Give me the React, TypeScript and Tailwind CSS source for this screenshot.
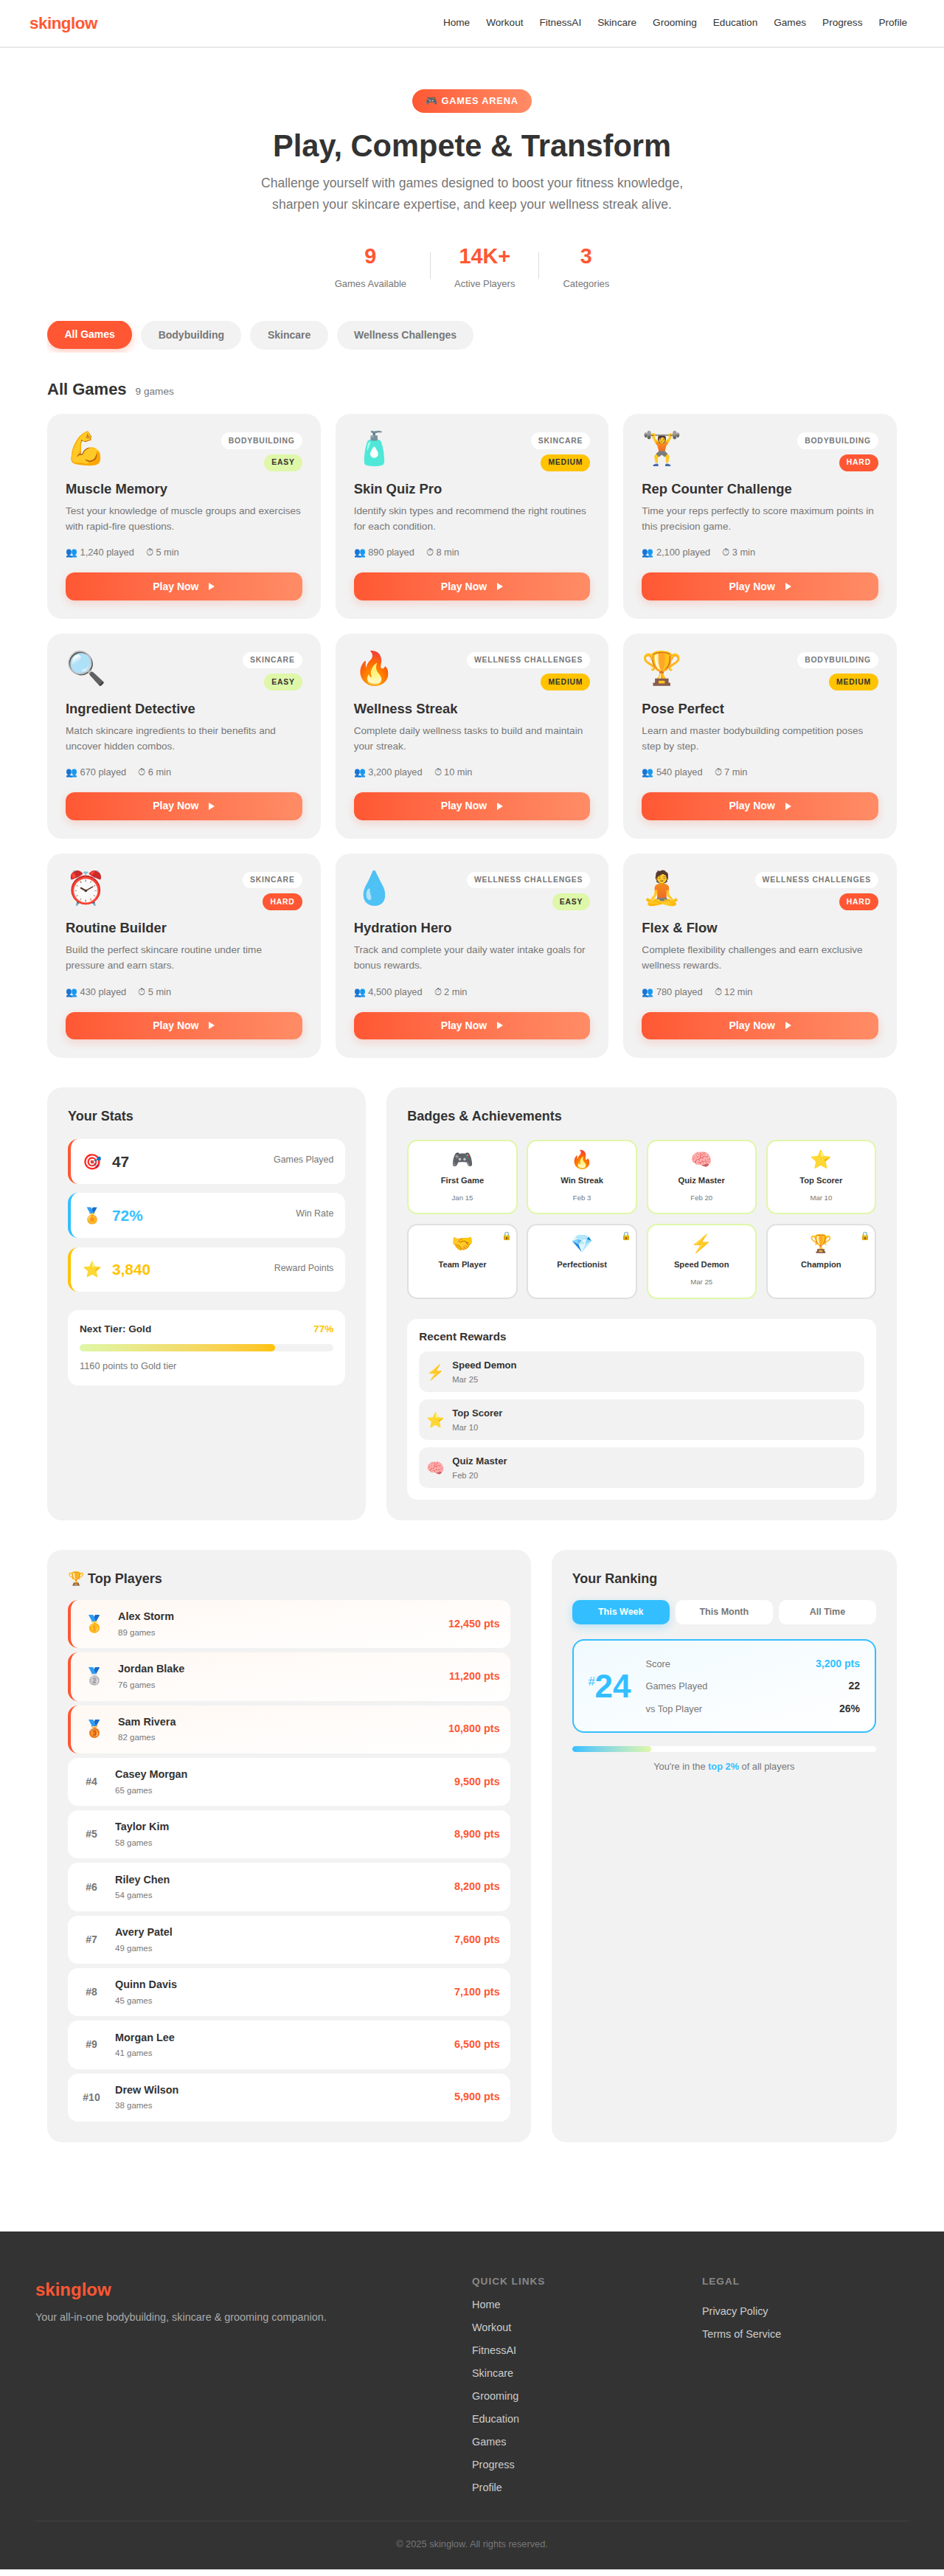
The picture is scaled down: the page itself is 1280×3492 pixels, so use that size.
import React from 'react';

const NAV = ['Home', 'Workout', 'FitnessAI', 'Skincare', 'Grooming', 'Education', 'Games', 'Progress', 'Profile'];

const GAMES = [
  { icon: '💪', cat: 'Bodybuilding', level: 'Easy', title: 'Muscle Memory', desc: 'Test your knowledge of muscle groups and exercises with rapid-fire questions.', played: '1,240', time: '5 min' },
  { icon: '🧴', cat: 'Skincare', level: 'Medium', title: 'Skin Quiz Pro', desc: 'Identify skin types and recommend the right routines for each condition.', played: '890', time: '8 min' },
  { icon: '🏋️', cat: 'Bodybuilding', level: 'Hard', title: 'Rep Counter Challenge', desc: 'Time your reps perfectly to score maximum points in this precision game.', played: '2,100', time: '3 min' },
  { icon: '🔍', cat: 'Skincare', level: 'Easy', title: 'Ingredient Detective', desc: 'Match skincare ingredients to their benefits and uncover hidden combos.', played: '670', time: '6 min' },
  { icon: '🔥', cat: 'Wellness Challenges', level: 'Medium', title: 'Wellness Streak', desc: 'Complete daily wellness tasks to build and maintain your streak.', played: '3,200', time: '10 min' },
  { icon: '🏆', cat: 'Bodybuilding', level: 'Medium', title: 'Pose Perfect', desc: 'Learn and master bodybuilding competition poses step by step.', played: '540', time: '7 min' },
  { icon: '⏰', cat: 'Skincare', level: 'Hard', title: 'Routine Builder', desc: 'Build the perfect skincare routine under time pressure and earn stars.', played: '430', time: '5 min' },
  { icon: '💧', cat: 'Wellness Challenges', level: 'Easy', title: 'Hydration Hero', desc: 'Track and complete your daily water intake goals for bonus rewards.', played: '4,500', time: '2 min' },
  { icon: '🧘', cat: 'Wellness Challenges', level: 'Hard', title: 'Flex & Flow', desc: 'Complete flexibility challenges and earn exclusive wellness rewards.', played: '780', time: '12 min' },
];

const LEVEL: Record<string, string> = {
  Easy: 'bg-[#dff7a8] text-[#333333]',
  Medium: 'bg-[#ffc300] text-[#333333]',
  Hard: 'bg-[#ff5733] text-white',
};

const BADGES = [
  { icon: '🎮', name: 'First Game', date: 'Jan 15' },
  { icon: '🔥', name: 'Win Streak', date: 'Feb 3' },
  { icon: '🧠', name: 'Quiz Master', date: 'Feb 20' },
  { icon: '⭐', name: 'Top Scorer', date: 'Mar 10' },
  { icon: '🤝', name: 'Team Player', date: '' },
  { icon: '💎', name: 'Perfectionist', date: '' },
  { icon: '⚡', name: 'Speed Demon', date: 'Mar 25' },
  { icon: '🏆', name: 'Champion', date: '' },
];

const REWARDS = [
  { icon: '⚡', name: 'Speed Demon', date: 'Mar 25' },
  { icon: '⭐', name: 'Top Scorer', date: 'Mar 10' },
  { icon: '🧠', name: 'Quiz Master', date: 'Feb 20' },
];

const PLAYERS = [
  { rank: '🥇', name: 'Alex Storm', games: 89, pts: '12,450' },
  { rank: '🥈', name: 'Jordan Blake', games: 76, pts: '11,200' },
  { rank: '🥉', name: 'Sam Rivera', games: 82, pts: '10,800' },
  { rank: '#4', name: 'Casey Morgan', games: 65, pts: '9,500' },
  { rank: '#5', name: 'Taylor Kim', games: 58, pts: '8,900' },
  { rank: '#6', name: 'Riley Chen', games: 54, pts: '8,200' },
  { rank: '#7', name: 'Avery Patel', games: 49, pts: '7,600' },
  { rank: '#8', name: 'Quinn Davis', games: 45, pts: '7,100' },
  { rank: '#9', name: 'Morgan Lee', games: 41, pts: '6,500' },
  { rank: '#10', name: 'Drew Wilson', games: 38, pts: '5,900' },
];

const GameCard: React.FC<{ game: (typeof GAMES)[number] }> = ({ game }) => (
  <div className="bg-[#f2f2f2] rounded-[20px] p-[25px] flex flex-col">
    <div className="flex justify-between items-start mb-[10.3px]">
      <span className="text-[44px] leading-[36px] pt-1">{game.icon}</span>
      <div className="flex flex-col items-end gap-[7px]">
        <span className="bg-white text-[#777777] text-[10.4px] font-bold uppercase tracking-[0.8px] px-2.5 h-[22.5px] flex items-center rounded-full">{game.cat}</span>
        <span className={`${LEVEL[game.level]} text-[10.4px] font-bold uppercase tracking-[0.8px] px-2.5 h-[23px] flex items-center rounded-full`}>{game.level}</span>
      </div>
    </div>
    <h3 className="text-[18.4px] font-bold text-[#333333] mb-[5.5px]">{game.title}</h3>
    <p className="text-[13.6px] leading-[21px] text-[#777777] mb-[15.3px]">{game.desc}</p>
    <div className="flex gap-4 text-[12.8px] text-[#777777] mb-[17.6px]">
      <span>👥 {game.played} played</span>
      <span>⏱ {game.time}</span>
    </div>
    <button className="h-[37.7px] rounded-xl bg-linear-to-r from-[#ff5733] to-[#ff8c66] text-white text-[14px] font-bold flex items-center justify-center gap-3.5 shadow-[0_4px_12px_rgba(255,87,51,0.2)]">
      Play Now
      <svg width="8" height="10" viewBox="0 0 8 10" fill="currentColor">
        <path d="M0 0 L8 5 L0 10 Z" />
      </svg>
    </button>
  </div>
);

export default function App() {
  return (
    <div className="font-['Liberation_Sans',sans-serif] bg-white text-[#333333]">
      <nav className="h-[65px] pl-10 pr-[50px] flex items-center justify-between border-b-2 border-[#e8e8e8]">
        <span className="text-[22.4px] font-bold tracking-[-0.5px] text-[#ff5733]">skinglow</span>
        <div className="flex gap-[22px]">
          {NAV.map((n) => (
            <a key={n} className="text-[13.6px] text-[#333333]">{n}</a>
          ))}
        </div>
      </nav>

      <header className="pt-[55.5px] flex flex-col items-center text-center">
        <span className="h-8 px-[18px] rounded-full bg-linear-to-r from-[#ff5733] to-[#ff8c66] text-white text-[12.8px] font-bold uppercase tracking-[0.8px] flex items-center">🎮 Games Arena</span>
        <h1 className="text-[41.6px] leading-[54px] font-bold text-[#333333] mt-[18.5px]">Play, Compete &amp; Transform</h1>
        <p className="text-[17.6px] leading-[29.6px] text-[#777777] mt-[8.6px] max-w-[620px]">
          Challenge yourself with games designed to boost your fitness knowledge, sharpen your skincare expertise, and keep your wellness streak alive.
        </p>
        <div className="flex items-center gap-8 mt-[36.4px]">
          <div>
            <div className="text-[28.8px] font-bold text-[#ff5733] leading-9">9</div>
            <div className="text-[13px] text-[#777777] mt-2.5">Games Available</div>
          </div>
          <div className="w-px h-9 bg-[#dddddd] -mt-[4px]"></div>
          <div>
            <div className="text-[28.8px] font-bold text-[#ff5733] leading-9">14K+</div>
            <div className="text-[13px] text-[#777777] mt-2.5">Active Players</div>
          </div>
          <div className="w-px h-9 bg-[#dddddd] -mt-[4px]"></div>
          <div>
            <div className="text-[28.8px] font-bold text-[#ff5733] leading-9">3</div>
            <div className="text-[13px] text-[#777777] mt-2.5">Categories</div>
          </div>
        </div>
      </header>

      <main className="px-16 pb-[121px]">
        <div className="flex gap-3 mt-[40.5px] pb-1 overflow-x-auto">
          <button className="h-[38.5px] px-[23.4px] rounded-[20px] bg-[#ff5733] text-white text-[14px] font-bold shadow-[0_4px_12px_rgba(255,87,51,0.3)] -translate-y-px">All Games</button>
          <button className="h-[38.5px] px-[23.4px] rounded-[20px] bg-[#f2f2f2] text-[#777777] text-[14px] font-bold">Bodybuilding</button>
          <button className="h-[38.5px] px-[23.4px] rounded-[20px] bg-[#f2f2f2] text-[#777777] text-[14px] font-bold">Skincare</button>
          <button className="h-[38.5px] px-[23.4px] rounded-[20px] bg-[#f2f2f2] text-[#777777] text-[14px] font-bold">Wellness Challenges</button>
        </div>

        <div className="flex items-baseline gap-3 mt-[33.5px] mb-[17px]">
          <h2 className="text-[22px] font-bold">All Games</h2>
          <span className="text-[13.6px] text-[#777777]">9 games</span>
        </div>
        <div className="grid grid-cols-3 gap-5">
          {GAMES.map((g) => (
            <GameCard key={g.title} game={g} />
          ))}
        </div>

        <div className="grid grid-cols-[1fr_1.6fr] gap-7 mt-10">
          <section className="bg-[#f2f2f2] rounded-[20px] p-7">
            <h2 className="text-[18px] leading-[22px] font-bold mb-5">Your Stats</h2>
            <div className="flex flex-col gap-[12.7px]">
              <div className="h-[60.5px] bg-white rounded-[14px] border-l-4 border-[#ff5733] px-4 flex items-center gap-3.5">
                <span className="text-[20.8px]">🎯</span>
                <span className="text-[20.8px] font-bold flex-1">47</span>
                <span className="text-[12.4px] text-[#777777] mb-1">Games Played</span>
              </div>
              <div className="h-[60.5px] bg-white rounded-[14px] border-l-4 border-[#33bfff] px-4 flex items-center gap-3.5">
                <span className="text-[20.8px]">🏅</span>
                <span className="text-[20.8px] font-bold text-[#33bfff] flex-1">72%</span>
                <span className="text-[12.4px] text-[#777777] mb-1">Win Rate</span>
              </div>
              <div className="h-[60.5px] bg-white rounded-[14px] border-l-4 border-[#ffc300] px-4 flex items-center gap-3.5">
                <span className="text-[20.8px]">⭐</span>
                <span className="text-[20.8px] font-bold text-[#ffc300] flex-1">3,840</span>
                <span className="text-[12.4px] text-[#777777] mb-1">Reward Points</span>
              </div>
            </div>
            <div className="bg-white rounded-[14px] p-4 mt-[25px]">
              <div className="flex justify-between text-[13.6px] font-bold mb-2.5">
                <span>Next Tier: Gold</span>
                <span className="text-[#ffc300]">77%</span>
              </div>
              <div className="h-2.5 rounded-full bg-[#f2f2f2] overflow-hidden">
                <div className="h-full w-[77%] rounded-full bg-linear-to-r from-[#dff7a8] to-[#ffc300]"></div>
              </div>
              <p className="text-[12.8px] text-[#777777] mt-2.5">1160 points to Gold tier</p>
            </div>
          </section>

          <section className="bg-[#f2f2f2] rounded-[20px] p-7">
            <h2 className="text-[18px] leading-[22px] font-bold mb-[20.8px]">Badges &amp; Achievements</h2>
            <div className="grid grid-cols-4 gap-[12.8px]">
              {BADGES.map((b) => (
                <div key={b.name} className={`relative h-[101.5px] bg-white rounded-[14px] border-2 text-center pt-2.5 ${b.date ? 'border-[#dff7a8]' : 'border-[#e0e0e0]'}`}>
                  {!b.date && <span className="absolute top-1.5 right-1.5 text-[11.2px]">🔒</span>}
                  <div className="text-[24px] leading-[30px]">{b.icon}</div>
                  <div className="text-[11.2px] font-bold mt-[5px]">{b.name}</div>
                  {b.date && <div className="text-[9.6px] text-[#777777] mt-2">{b.date}</div>}
                </div>
              ))}
            </div>
            <div className="bg-white rounded-[14px] p-4 mt-[27px]">
              <h3 className="text-[15.2px] leading-[15px] font-bold mb-[13.7px]">Recent Rewards</h3>
              <div className="flex flex-col gap-[10.5px]">
                {REWARDS.map((r) => (
                  <div key={r.name} className="h-[54.5px] bg-[#f2f2f2] rounded-xl px-2.5 flex items-center gap-2.5">
                    <span className="text-[20px]">{r.icon}</span>
                    <div>
                      <div className="text-[13.1px] font-bold">{r.name}</div>
                      <div className="text-[11.2px] text-[#777777] mt-px">{r.date}</div>
                    </div>
                  </div>
                ))}
              </div>
            </div>
          </section>
        </div>

        <div className="grid grid-cols-[1.4fr_1fr] gap-7 mt-10">
          <section className="bg-[#f2f2f2] rounded-[20px] p-7">
            <h2 className="text-[18px] leading-[22px] font-bold mb-[18px]">🏆 Top Players</h2>
            <div className="flex flex-col gap-1.5">
              {PLAYERS.map((p, i) => (
                <div key={p.name} className={`h-[65.3px] rounded-[14px] px-3.5 flex items-center gap-3.5 ${i < 3 ? 'border-l-4 border-[#ff5733] bg-linear-to-br from-[#fff8f3] to-white' : 'bg-white'}`}>
                  <span className={`w-9 shrink-0 text-center font-bold ${i < 3 ? 'text-[22.4px]' : 'text-[14px] text-[#777777]'}`}>{p.rank}</span>
                  <div className="flex-1">
                    <div className="text-[14.4px] font-bold">{p.name}</div>
                    <div className="text-[11.5px] text-[#777777] mt-0.5">{p.games} games</div>
                  </div>
                  <span className="text-[14.4px] font-bold text-[#ff5733]">{p.pts} pts</span>
                </div>
              ))}
            </div>
          </section>

          <section className="bg-[#f2f2f2] rounded-[20px] p-7">
            <h2 className="text-[18px] leading-[22px] font-bold mb-[18px]">Your Ranking</h2>
            <div className="grid grid-cols-3 gap-2">
              <button className="h-[33px] rounded-[10px] bg-[#33bfff] text-white text-[12.5px] font-bold shadow-[0_4px_12px_rgba(51,191,255,0.3)]">This Week</button>
              <button className="h-[33px] rounded-[10px] bg-white text-[#777777] text-[12.5px] font-bold">This Month</button>
              <button className="h-[33px] rounded-[10px] bg-white text-[#777777] text-[12.5px] font-bold">All Time</button>
            </div>
            <div className="mt-5 h-[127.5px] rounded-2xl border-2 border-[#33bfff] bg-linear-to-br from-[#f0faff] to-white px-5 flex items-center gap-5">
              <div className="text-[#33bfff] font-bold leading-none whitespace-nowrap">
                <span className="text-[16px] align-[16px] font-normal">#</span>
                <span className="text-[44px]">24</span>
              </div>
              <div className="flex-1 flex flex-col gap-[9.5px]">
                <div className="flex justify-between items-center text-[12.8px] text-[#777777]">
                  <span>Score</span>
                  <span className="text-[14px] font-bold text-[#33bfff]">3,200 pts</span>
                </div>
                <div className="flex justify-between items-center text-[12.8px] text-[#777777]">
                  <span>Games Played</span>
                  <span className="text-[14px] font-bold text-[#333333]">22</span>
                </div>
                <div className="flex justify-between items-center text-[12.8px] text-[#777777]">
                  <span>vs Top Player</span>
                  <span className="text-[14px] font-bold text-[#333333]">26%</span>
                </div>
              </div>
            </div>
            <div className="h-2 rounded-full bg-white mt-[18px] overflow-hidden">
              <div className="h-full w-[26%] rounded-full bg-linear-to-r from-[#33bfff] to-[#dff7a8]"></div>
            </div>
            <p className="text-[12.8px] text-[#777777] text-center mt-2.5">
              You're in the <b className="text-[#33bfff]">top 2%</b> of all players
            </p>
          </section>
        </div>
      </main>

      <footer className="bg-[#333333] mb-[6px] px-12 pt-[58px] pb-[25.4px]">
        <div className="grid grid-cols-[2fr_1fr_1fr] gap-8">
          <div className="pt-[3px]">
            <div className="text-[24px] font-bold text-[#ff5733]">skinglow</div>
            <p className="text-[14.4px] text-[#aaaaaa] mt-[9.5px]">Your all-in-one bodybuilding, skincare &amp; grooming companion.</p>
          </div>
          <div>
            <h4 className="text-[13.6px] leading-[19.2px] font-bold uppercase tracking-[1px] text-[#888888] mb-[14px]">Quick Links</h4>
            <div className="flex flex-col gap-[14px]">
              {NAV.map((n) => (
                <a key={n} className="text-[14.4px] leading-[17px] text-[#cccccc]">{n}</a>
              ))}
            </div>
          </div>
          <div>
            <h4 className="text-[13.6px] leading-[19.2px] font-bold uppercase tracking-[1px] text-[#888888] mb-[22.5px]">Legal</h4>
            <div className="flex flex-col gap-[14px]">
              <a className="text-[14.4px] leading-[17px] text-[#cccccc]">Privacy Policy</a>
              <a className="text-[14.4px] leading-[17px] text-[#cccccc]">Terms of Service</a>
            </div>
          </div>
        </div>
        <div className="border-t border-[#444444] mt-9 pt-[20.5px] text-center text-[12.8px] text-[#777777]">© 2025 skinglow. All rights reserved.</div>
      </footer>
    </div>
  );
}
